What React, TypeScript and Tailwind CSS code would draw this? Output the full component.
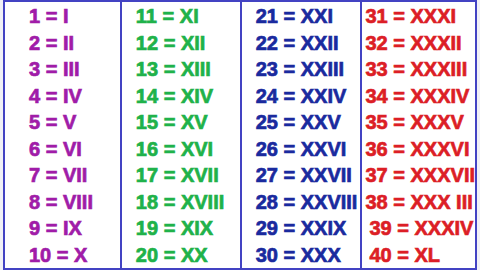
import React from 'react';

type Column = {
  color: string;
  width: string;
  pad: string;
  rows: { n: number; r: string; shift?: string }[];
};

const toRoman = (n: number) => {
  const parts: [number, string][] = [
    [40, 'XL'],
    [10, 'X'],
    [9, 'IX'],
    [5, 'V'],
    [4, 'IV'],
    [1, 'I'],
  ];
  let out = '';
  let rest = n;
  for (const [v, s] of parts) {
    while (rest >= v) {
      out += s;
      rest -= v;
    }
  }
  return out;
};

const range = (from: number) =>
  Array.from({ length: 10 }, (_, i) => ({ n: from + i, r: toRoman(from + i) }));

// the picture has a couple of quirks in the last column, kept as is
const lastColumn = range(31).map(row => {
  if (row.n === 38) return { ...row, r: 'XXX III' };
  if (row.n === 39) return { ...row, r: 'XXXIV', shift: 'pl-[4px]' };
  if (row.n === 40) return { ...row, shift: 'pl-[4px]' };
  return row;
});

const columns: Column[] = [
  { color: 'text-[#a01ca8]', width: 'w-[117px] border-r-2', pad: 'pl-[24px]', rows: range(1) },
  { color: 'text-[#1fb24a]', width: 'w-[120px] border-r-2', pad: 'pl-[14px]', rows: range(11) },
  { color: 'text-[#1a2a9e]', width: 'w-[121px] border-r-2', pad: 'pl-[14px]', rows: range(21) },
  { color: 'text-[#dc1e26]', width: 'flex-1', pad: 'pl-[3px]', rows: lastColumn },
];

const App: React.FC = () => {
  return (
    <div className="w-[480px] h-[270px] bg-[#f1f1f6] overflow-hidden">
      <div className="ml-[3px] w-[474px] h-[270px] flex border-2 border-[#4343c3] bg-white font-['Liberation_Sans',Arial,sans-serif] font-bold text-[20px] leading-[26.5px] [-webkit-text-stroke:0.7px_currentColor]">
        {columns.map((col, i) => (
          <div key={i} className={`${col.width} border-[#4343c3] pt-[1px] flex flex-col ${col.pad} ${col.color}`}>
            {col.rows.map(row => (
              <div key={row.n} className={`whitespace-nowrap ${row.shift ?? ''}`}>
                {row.n} = {row.r}
              </div>
            ))}
          </div>
        ))}
      </div>
    </div>
  );
};

export default App;
